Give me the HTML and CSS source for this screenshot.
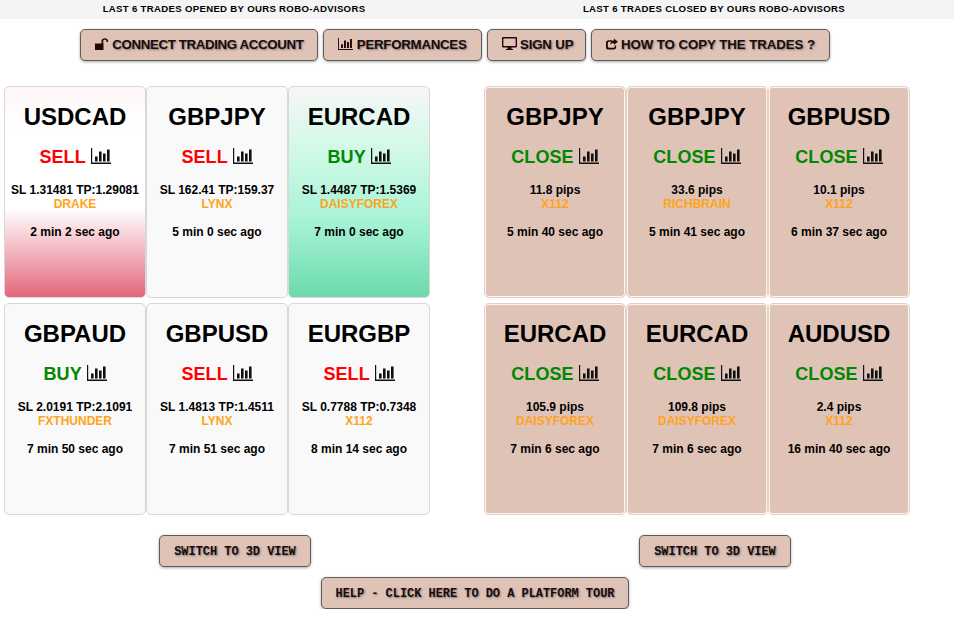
FILE: index.html
```html
<!DOCTYPE html>
<html lang="en">
<head>
  <meta charset="UTF-8">
  <title>Robo-advisors trades</title>
  <link rel="stylesheet" href="styles.css">
</head>
<body>
  <svg class="defs" width="0" height="0">
    <symbol id="bars" viewBox="0 0 20 16">
      <path d="M0 0h1.200v14.600H20V16H0z"/>
      <path d="M4 8.400h2.600v5H4zM8 3.400h2.600v10H8zM12 5.400h2.600v8H12zM16 1.400h2.600v12H16z"/>
    </symbol>
  </svg>

  <header class="titles">
    <h2>LAST 6 TRADES OPENED BY OURS ROBO-ADVISORS</h2>
    <h2>LAST 6 TRADES CLOSED BY OURS ROBO-ADVISORS</h2>
  </header>

  <nav class="menu">
    <button class="btn btn-connect">
      <svg class="icon" width="14" height="12" viewBox="0 0 14 12"><path d="M0 5.500h8.500V12H0z"/><path d="M6.500 6V3.200C6.500 1.300 8 .2 9.800.2s3.300 1.100 3.300 3V4h-1.700v-.8c0-.9-.7-1.400-1.600-1.400s-1.600.5-1.600 1.400V6z"/></svg>
      CONNECT TRADING ACCOUNT
    </button>
    <button class="btn btn-perf">
      <svg class="icon" width="15" height="12"><use href="#bars"/></svg>
      PERFORMANCES
    </button>
    <button class="btn btn-sign">
      <svg class="icon" width="15" height="13" viewBox="0 0 15 13"><path d="M1 0h13a1 1 0 0 1 1 1v8.500a1 1 0 0 1-1 1H9.500V12H11v1H4v-1h1.500v-1.500H1a1 1 0 0 1-1-1V1a1 1 0 0 1 1-1zm.4 1.400v7.700h12.200V1.400z"/></svg>
      SIGN UP
    </button>
    <button class="btn btn-copy">
      <svg class="icon" width="12" height="12" viewBox="0 0 13 12"><path d="M3 2h4v1.500H3.200c-.7 0-1.200.5-1.200 1.200v4.100c0 .7.500 1.200 1.200 1.200h5.100c.7 0 1.200-.5 1.200-1.200V7.500H11v1.800C11 11 10 12 8.500 12H2.500C1 12 0 11 0 9.500v-5C0 3 1 2 3 2z"/><path d="M8.500 0L13 3.500 8.500 7V5C6.500 5 5 5.800 4.500 7.500 4.500 4.500 6 2.500 8.500 2.200z"/></svg>
      HOW TO COPY THE TRADES ?
    </button>
  </nav>

  <main class="boards">
    <section class="board">
      <div class="cards">
        <article class="card card-sell">
          <h3>USDCAD</h3>
          <div class="signal red">SELL <svg class="bars"><use href="#bars"/></svg></div>
          <p class="levels">SL 1.31481 TP:1.29081</p>
          <p class="robot">DRAKE</p>
          <p class="age">2 min 2 sec ago</p>
        </article>
        <article class="card">
          <h3>GBPJPY</h3>
          <div class="signal red">SELL <svg class="bars"><use href="#bars"/></svg></div>
          <p class="levels">SL 162.41 TP:159.37</p>
          <p class="robot">LYNX</p>
          <p class="age">5 min 0 sec ago</p>
        </article>
        <article class="card card-buy">
          <h3>EURCAD</h3>
          <div class="signal green">BUY <svg class="bars"><use href="#bars"/></svg></div>
          <p class="levels">SL 1.4487 TP:1.5369</p>
          <p class="robot">DAISYFOREX</p>
          <p class="age">7 min 0 sec ago</p>
        </article>
        <article class="card">
          <h3>GBPAUD</h3>
          <div class="signal green">BUY <svg class="bars"><use href="#bars"/></svg></div>
          <p class="levels">SL 2.0191 TP:2.1091</p>
          <p class="robot">FXTHUNDER</p>
          <p class="age">7 min 50 sec ago</p>
        </article>
        <article class="card">
          <h3>GBPUSD</h3>
          <div class="signal red">SELL <svg class="bars"><use href="#bars"/></svg></div>
          <p class="levels">SL 1.4813 TP:1.4511</p>
          <p class="robot">LYNX</p>
          <p class="age">7 min 51 sec ago</p>
        </article>
        <article class="card">
          <h3>EURGBP</h3>
          <div class="signal red">SELL <svg class="bars"><use href="#bars"/></svg></div>
          <p class="levels">SL 0.7788 TP:0.7348</p>
          <p class="robot">X112</p>
          <p class="age">8 min 14 sec ago</p>
        </article>
      </div>
      <button class="btn btn-mono">SWITCH TO 3D VIEW</button>
    </section>

    <section class="board">
      <div class="cards">
        <article class="card card-closed">
          <h3>GBPJPY</h3>
          <div class="signal green">CLOSE <svg class="bars"><use href="#bars"/></svg></div>
          <p class="levels">11.8 pips</p>
          <p class="robot">X112</p>
          <p class="age">5 min 40 sec ago</p>
        </article>
        <article class="card card-closed">
          <h3>GBPJPY</h3>
          <div class="signal green">CLOSE <svg class="bars"><use href="#bars"/></svg></div>
          <p class="levels">33.6 pips</p>
          <p class="robot">RICHBRAIN</p>
          <p class="age">5 min 41 sec ago</p>
        </article>
        <article class="card card-closed">
          <h3>GBPUSD</h3>
          <div class="signal green">CLOSE <svg class="bars"><use href="#bars"/></svg></div>
          <p class="levels">10.1 pips</p>
          <p class="robot">X112</p>
          <p class="age">6 min 37 sec ago</p>
        </article>
        <article class="card card-closed">
          <h3>EURCAD</h3>
          <div class="signal green">CLOSE <svg class="bars"><use href="#bars"/></svg></div>
          <p class="levels">105.9 pips</p>
          <p class="robot">DAISYFOREX</p>
          <p class="age">7 min 6 sec ago</p>
        </article>
        <article class="card card-closed">
          <h3>EURCAD</h3>
          <div class="signal green">CLOSE <svg class="bars"><use href="#bars"/></svg></div>
          <p class="levels">109.8 pips</p>
          <p class="robot">DAISYFOREX</p>
          <p class="age">7 min 6 sec ago</p>
        </article>
        <article class="card card-closed">
          <h3>AUDUSD</h3>
          <div class="signal green">CLOSE <svg class="bars"><use href="#bars"/></svg></div>
          <p class="levels">2.4 pips</p>
          <p class="robot">X112</p>
          <p class="age">16 min 40 sec ago</p>
        </article>
      </div>
      <button class="btn btn-mono">SWITCH TO 3D VIEW</button>
    </section>
  </main>

  <div class="help">
    <button class="btn btn-mono">HELP - CLICK HERE TO DO A PLATFORM TOUR</button>
  </div>
</body>
</html>
```

FILE: styles.css
```css
body {
  margin: 0;
  font-family: "Liberation Sans", Arial, sans-serif;
  font-weight: bold;
  color: #000;
  background: #fff;
}

.defs {
  position: absolute;
}

.titles {
  display: grid;
  grid-template-columns: 468px 468px;
  column-gap: 12px;
  height: 19px;
  background: #f4f4f4;
}

.titles h2 {
  margin: 0;
  font-size: 9.6px;
  line-height: 17px;
  letter-spacing: 0.32px;
  text-align: center;
}

.btn {
  height: 32px;
  padding: 0 14px 2px;
  border: 1px solid #5c5c5c;
  border-radius: 5px;
  background: #e0c3b7;
  box-shadow: 0 1px 3px rgba(0, 0, 0, 0.35);
  color: #1a0a0a;
  font: bold 13.3px "Liberation Sans", Arial, sans-serif;
  letter-spacing: -0.2px;
  text-shadow: 1px 1px 2px #777;
  cursor: pointer;
}

.btn-connect {
  letter-spacing: -0.37px;
}

.btn-perf {
  letter-spacing: -0.28px;
}

.btn-sign {
  padding-right: 12px;
}

.btn-copy {
  letter-spacing: -0.08px;
}

.btn-copy .icon {
  margin-right: -1px;
}

.btn-mono {
  padding: 2px 14px 0;
  font: bold 12px "Liberation Mono", "Courier New", monospace;
  letter-spacing: -0.05px;
}

.icon {
  fill: #2a0508;
  vertical-align: -1px;
}

.menu {
  display: flex;
  justify-content: center;
  gap: 5px;
  width: 910px;
  padding-top: 10px;
}

.boards {
  display: grid;
  grid-template-columns: 470px 470px;
  column-gap: 10px;
  margin-top: 25px;
}

.board {
  display: flex;
  flex-direction: column;
  align-items: center;
  gap: 20px;
}

.cards {
  display: grid;
  grid-template-columns: repeat(3, 142px);
  grid-auto-rows: 212px;
  row-gap: 5px;
  align-self: flex-start;
  margin-left: 4px;
}

.card {
  padding-top: 16px;
  border: 1px solid #d8d8d8;
  border-radius: 5px;
  background: #f9f9f9;
  box-sizing: border-box;
  text-align: center;
}

.card-sell {
  background: linear-gradient(to bottom, #fdf6f6 0%, #fff 20%, #fff 58%, #e3677a 100%);
}

.card-buy {
  background: linear-gradient(to bottom, #f6f6f6 0%, #d8f9ea 25%, #a9f4d8 62%, #6cdaab 100%);
}

.card-closed {
  border-color: #e6d0c6;
  background: #e0c3b7;
  box-shadow: inset 0 0 0 1px #fbf4f1;
}

.card h3 {
  margin: 0;
  font-size: 24px;
  line-height: 28px;
}

.signal {
  margin-top: 14px;
  font-size: 18px;
  line-height: 24px;
  letter-spacing: 0.1px;
}

.red {
  color: #f00;
}

.green {
  color: #080;
}

.bars {
  width: 20px;
  height: 16px;
  fill: #111;
  vertical-align: -1px;
}

.card p {
  margin: 0;
  font-size: 12px;
  line-height: 14px;
}

.card .levels {
  margin-top: 14px;
}

.card .robot {
  color: #ffa31a;
}

.card .age {
  margin-top: 14px;
}

.help {
  display: flex;
  justify-content: center;
  width: 950px;
  margin-top: 10px;
}
```
